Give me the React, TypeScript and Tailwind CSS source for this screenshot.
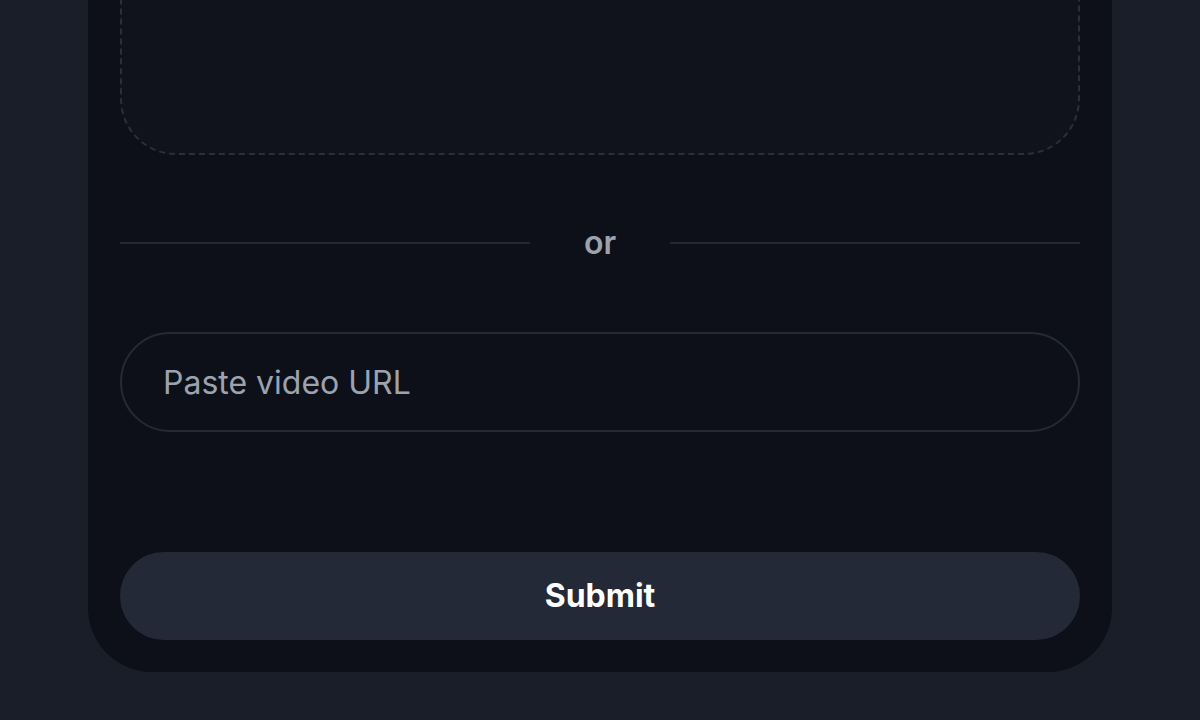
import { useEffect, useRef, useState } from 'react';

export default function App() {
  const [url, setUrl] = useState('');
  const inputRef = useRef<HTMLInputElement>(null);

  useEffect(() => {
    inputRef.current?.focus();
  }, []);

  return (
    <div
      className="h-[720px] overflow-hidden bg-[#191e29] flex flex-col items-center justify-end pb-12"
      style={{ fontFamily: 'Inter, "Liberation Sans", sans-serif' }}
    >
      <div className="w-[1024px] shrink-0 bg-[#0d1019] rounded-[64px] px-8 pt-8 pb-8 flex flex-col">
        {/* drop zone, mostly scrolled off the top */}
        <div className="h-[400px] rounded-[56px] border-2 border-dashed border-[#2a2f3b] bg-[#10131c]" />

        <div className="mt-[68px] h-10 flex items-center">
          <div className="flex-1 h-0.5 bg-[#232834]" />
          <span className="px-[54px] text-[32px] leading-10 font-semibold text-[#9ca3af]">or</span>
          <div className="flex-1 h-0.5 bg-[#232834]" />
        </div>

        <input
          ref={inputRef}
          value={url}
          onChange={e => setUrl(e.target.value)}
          placeholder="Paste video URL"
          className="mt-[69px] h-[100px] w-full rounded-full border-2 border-[#252a36] bg-[#0d1019] pl-[41px] pr-10 text-[32px] text-white placeholder:text-[#9ca3af] caret-[#9ca3af] outline-none"
        />

        <button className="mt-[120px] h-[88px] w-full rounded-full bg-[#232937] text-[32px] font-bold text-white">
          Submit
        </button>
      </div>
    </div>
  );
}
